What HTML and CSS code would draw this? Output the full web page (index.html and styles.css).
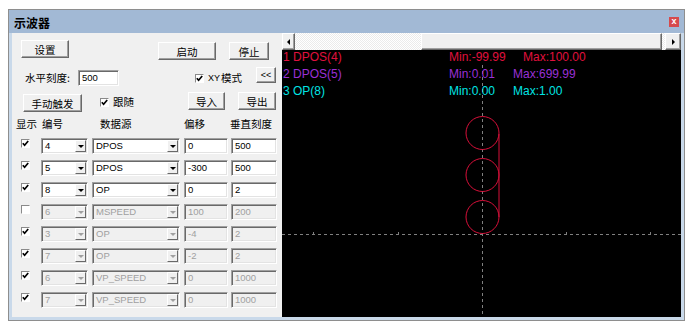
FILE: index.html
```html
<!DOCTYPE HTML><html>
  <head>
    <title>示波器</title>
    <meta name="viewport" content="width=device-width, initial-scale=1">
    <link rel="stylesheet" href="styles.css">
  </head>
  <body>
    <div class="win">
      <div class="titlebar">
        <span class="title">示波器</span>
        <span class="close">x</span>
      </div>
      <div class="body">
        <div class="panel">
          <div class="row row-a">
            <button class="btn b-set">设置</button>
            <button class="btn b-start">启动</button>
            <button class="btn b-stop">停止</button>
          </div>
          <div class="row row-b">
            <span class="lbl lbl-scale">水平刻度:</span>
            <span class="field f-scale">500</span>
            <span class="chk-lbl cl-xy"><span class="chk on"><svg viewBox="0 0 7 7"><polyline points="0.8,3.2 2.6,5.2 6.2,1"/></svg></span><span class="lat">XY</span>模式</span>
            <button class="btn b-back">&lt;&lt;</button>
          </div>
          <div class="row row-c">
            <button class="btn b-trig">手动触发</button>
            <span class="chk-lbl cl-follow"><span class="chk on"><svg viewBox="0 0 7 7"><polyline points="0.8,3.2 2.6,5.2 6.2,1"/></svg></span>跟随</span>
            <button class="btn b-in">导入</button>
            <button class="btn b-out">导出</button>
          </div>
          <div class="head">
            <span class="h-show">显示</span>
            <span class="h-num">编号</span>
            <span class="h-src">数据源</span>
            <span class="h-off">偏移</span>
            <span class="h-scale">垂直刻度</span>
          </div>
          <div class="channels">
            <div class="ch">
              <span class="chk on"><svg viewBox="0 0 7 7"><polyline points="0.8,3.2 2.6,5.2 6.2,1"/></svg></span>
              <span class="field combo c-num"><span class="val">4</span><span class="arr"></span></span>
              <span class="field combo c-src"><span class="val">DPOS</span><span class="arr"></span></span>
              <span class="field f-off">0</span>
              <span class="field f-vs">500</span>
            </div>
            <div class="ch">
              <span class="chk on"><svg viewBox="0 0 7 7"><polyline points="0.8,3.2 2.6,5.2 6.2,1"/></svg></span>
              <span class="field combo c-num"><span class="val">5</span><span class="arr"></span></span>
              <span class="field combo c-src"><span class="val">DPOS</span><span class="arr"></span></span>
              <span class="field f-off">-300</span>
              <span class="field f-vs">500</span>
            </div>
            <div class="ch">
              <span class="chk on"><svg viewBox="0 0 7 7"><polyline points="0.8,3.2 2.6,5.2 6.2,1"/></svg></span>
              <span class="field combo c-num"><span class="val">8</span><span class="arr"></span></span>
              <span class="field combo c-src"><span class="val">OP</span><span class="arr"></span></span>
              <span class="field f-off">0</span>
              <span class="field f-vs">2</span>
            </div>
            <div class="ch off">
              <span class="chk"></span>
              <span class="field combo c-num"><span class="val">6</span><span class="arr"></span></span>
              <span class="field combo c-src"><span class="val">MSPEED</span><span class="arr"></span></span>
              <span class="field f-off">100</span>
              <span class="field f-vs">200</span>
            </div>
            <div class="ch off">
              <span class="chk on"><svg viewBox="0 0 7 7"><polyline points="0.8,3.2 2.6,5.2 6.2,1"/></svg></span>
              <span class="field combo c-num"><span class="val">3</span><span class="arr"></span></span>
              <span class="field combo c-src"><span class="val">OP</span><span class="arr"></span></span>
              <span class="field f-off">-4</span>
              <span class="field f-vs">2</span>
            </div>
            <div class="ch off">
              <span class="chk on"><svg viewBox="0 0 7 7"><polyline points="0.8,3.2 2.6,5.2 6.2,1"/></svg></span>
              <span class="field combo c-num"><span class="val">7</span><span class="arr"></span></span>
              <span class="field combo c-src"><span class="val">OP</span><span class="arr"></span></span>
              <span class="field f-off">-2</span>
              <span class="field f-vs">2</span>
            </div>
            <div class="ch off">
              <span class="chk on"><svg viewBox="0 0 7 7"><polyline points="0.8,3.2 2.6,5.2 6.2,1"/></svg></span>
              <span class="field combo c-num"><span class="val">6</span><span class="arr"></span></span>
              <span class="field combo c-src"><span class="val">VP_SPEED</span><span class="arr"></span></span>
              <span class="field f-off">0</span>
              <span class="field f-vs">1000</span>
            </div>
            <div class="ch off">
              <span class="chk on"><svg viewBox="0 0 7 7"><polyline points="0.8,3.2 2.6,5.2 6.2,1"/></svg></span>
              <span class="field combo c-num"><span class="val">7</span><span class="arr"></span></span>
              <span class="field combo c-src"><span class="val">VP_SPEED</span><span class="arr"></span></span>
              <span class="field f-off">0</span>
              <span class="field f-vs">1000</span>
            </div>
          </div>
        </div>
        <div class="scope">
          <div class="hscroll">
            <span class="sb-btn sb-left"><span class="tri-l"></span></span>
            <span class="sb-track"><span class="sb-thumb"></span></span>
            <span class="sb-btn sb-right"><span class="tri-r"></span></span>
          </div>
          <div class="plot">
            <svg class="grid" width="399" height="267" viewBox="0 0 399 267">
              <g stroke="#808080" stroke-width="1">
                <line x1="0" y1="184.5" x2="399" y2="184.5" stroke-dasharray="3 3"/>
                <line x1="200.5" y1="15" x2="200.5" y2="267" stroke-dasharray="3 3"/>
                <line x1="31.5" y1="182" x2="31.5" y2="184"/>
                <line x1="116.5" y1="182" x2="116.5" y2="184"/>
                <line x1="284.5" y1="182" x2="284.5" y2="184"/>
                <line x1="368.5" y1="182" x2="368.5" y2="184"/>
              </g>
              <g stroke="#d8103a" stroke-width="1" fill="none">
                <circle cx="200.5" cy="83" r="16.5"/>
                <circle cx="200.5" cy="125" r="16.5"/>
                <circle cx="200.5" cy="167" r="16.5"/>
                <line x1="217" y1="84" x2="217" y2="167"/>
              </g>
            </svg>
            <div class="legend">
              <div class="lg-row c1"><span class="lg-name">1 DPOS(4)</span><span class="lg-min wide">Min:-99.99</span><span>Max:100.00</span></div>
              <div class="lg-row c2"><span class="lg-name">2 DPOS(5)</span><span class="lg-min">Min:0.01</span><span>Max:699.99</span></div>
              <div class="lg-row c3"><span class="lg-name">3 OP(8)</span><span class="lg-min">Min:0.00</span><span>Max:1.00</span></div>
            </div>
          </div>
        </div>
      </div>
    </div>
  </body>
</html>
```

FILE: styles.css
```css
html {font-family: "Noto Sans CJK SC", sans-serif;}
body {margin: 0; background-color: #fff; color: #000;}

.win {margin: 9px 0 0 8px; width: 677px; height: 312px; box-sizing: border-box; border: 1px solid #8e8e8e; background-color: #c9d9ea; display: flex; flex-direction: column;}
.titlebar {height: 23px; background-color: #a2b9d5; display: flex; justify-content: space-between; align-items: flex-start;}
.title {font-size: 12px; font-weight: bold; line-height: 14px; margin: 6px 0 0 5px;}
.close {width: 10px; height: 10px; margin: 7px 5px 0 0; background-color: #d64a4c; color: #fff; font: bold 9px/9px "Liberation Sans", sans-serif; text-align: center;}

.body {display: flex; height: 284px; margin: 0 3px;}
.panel {width: 270px; background-color: #f0f0f0; font-size: 10.5px;}
.scope {width: 399px; display: flex; flex-direction: column;}

/* top controls */
.row {display: flex; align-items: flex-start;}
.row-a {height: 20px; margin-top: 7px;}
.row-b {height: 19px; margin-top: 7px;}
.row-c {height: 20px; margin-top: 6px;}

.btn {box-sizing: border-box; height: 18px; padding: 0; background-color: #f0f0f0; border: 1px solid; border-color: #fff #696969 #696969 #fff; box-shadow: inset -1px -1px #a0a0a0; font: 10.5px/15px "Noto Sans CJK SC", sans-serif; color: #000;}
.b-set {width: 48px; margin-left: 9px;}
.b-start {width: 58px; margin: 2px 0 0 89px;}
.b-stop {width: 40px; margin: 2px 0 0 13px;}
.b-back {width: 20px; height: 16px; font: 9px/13px "Liberation Sans", sans-serif;}
.b-trig {width: 59px; margin: 2px 0 0 11px;}
.b-in {width: 37px;}
.b-out {width: 38px; margin-left: 13px;}

.lbl {line-height: 19px;}
.lbl-scale {width: 53px; margin-left: 13px; padding-top: 1px;}
.f-scale {width: 41px; margin-top: 3px;}

.chk-lbl {display: flex; align-items: center; line-height: 14px;}
.chk-lbl .chk {margin: 0 4px 0 0;}
.cl-xy {width: 61px; margin: 4px 0 0 76px;}
.cl-follow {width: 88px; margin: 3px 0 0 18px;}
.lat {font: 9px "Liberation Sans", sans-serif; margin-right: 1px;}

.chk {box-sizing: border-box; display: inline-flex; align-items: center; justify-content: center; width: 9px; height: 9px; border: 1px solid; border-color: #8a8a8a #fff #fff #8a8a8a; background-color: #fff;}
.chk svg {width: 7px; height: 7px; fill: none; stroke: #000; stroke-width: 1.7;}

/* channel table */
.head {display: flex; height: 22px; line-height: 22px; margin: 1px 0 0 4px;}
.h-show {width: 26px;}
.h-num {width: 58px;}
.h-src {width: 84px;}
.h-off {width: 46px;}

.ch {display: flex; align-items: flex-start; height: 22px;}
.ch > .chk {margin: 4px 0 0 9px;}
.field {box-sizing: border-box; display: flex; height: 16px; margin-top: 3px; padding-left: 3px; border: 1px solid; border-color: #a0a0a0 #fff #fff #a0a0a0; box-shadow: inset 1px 1px #696969, inset -1px -1px #e3e3e3; background-color: #fff; font: 9.5px/14px "Liberation Sans Narrow", "Liberation Sans", sans-serif; color: #000; white-space: nowrap;}
.ch.off .field {background-color: #f0f0f0; color: #a0a0a0;}
.combo .val {flex: 1;}
.combo .arr {box-sizing: border-box; width: 11px; height: 12px; margin: 1px 1px 0 0; border: 1px solid; border-color: #fff #696969 #696969 #fff; background-color: #f0f0f0; display: flex; align-items: center; justify-content: center;}
.combo .arr::after {content: ""; border-left: 3px solid transparent; border-right: 3px solid transparent; border-top: 3px solid #000;}
.ch.off .combo .arr::after {border-top-color: #a0a0a0;}
.c-num {width: 47px; margin-left: 11px;}
.c-src {width: 88px; margin-left: 4px;}
.f-off {width: 44px; margin-left: 4px;}
.f-vs {width: 46px; margin-left: 3px;}

/* scroll bar over the trace */
.hscroll {display: flex; height: 17px;}
.sb-btn {box-sizing: border-box; display: flex; align-items: center; justify-content: center; height: 17px; background-color: #f0f0f0; border: 1px solid; border-color: #fff #696969 #696969 #fff; box-shadow: inset -1px -1px #a0a0a0;}
.sb-left {width: 13px;}
.sb-right {width: 16px;}
.tri-l {border-top: 3px solid transparent; border-bottom: 3px solid transparent; border-right: 3px solid #000;}
.tri-r {border-top: 3px solid transparent; border-bottom: 3px solid transparent; border-left: 3px solid #000;}
.sb-track {flex: 1; display: flex; padding: 0 3px 0 126px; background: repeating-conic-gradient(#fff 0 25%, #ebebeb 0 50%) 0 0 / 2px 2px;}
.sb-thumb {flex: 1; box-sizing: border-box; background-color: #f0f0f0; border: 1px solid; border-color: #fff #696969 #696969 #fff; box-shadow: inset -1px -1px #a0a0a0;}

/* trace area */
.plot {position: relative; flex: 1; background-color: #000; overflow: hidden;}
.plot .grid {position: absolute; left: 0; top: 0;}
.legend {position: relative; margin-top: -1px; font: 12px/17px "Liberation Sans", sans-serif;}
.lg-row {display: flex; height: 17px; white-space: nowrap;}
.lg-name {width: 166px; padding-left: 1px;}
.lg-min {width: 64px;}
.lg-min.wide {width: 74px;}
.c1 {color: #e0103e;}
.c2 {color: #9a30d6;}
.c3 {color: #00e4e4;}
```
